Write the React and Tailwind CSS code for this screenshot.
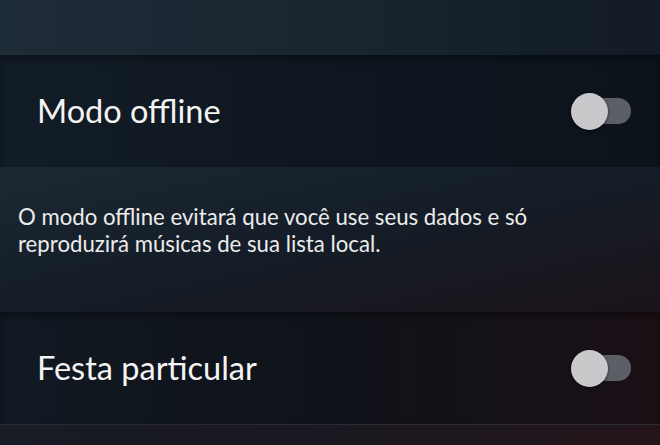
export default function App() {
  const Toggle = () => (
    <div className="relative w-[60px] h-[38px] flex items-center">
      <div className="absolute left-[19px] w-[41px] h-[26px] rounded-full bg-[#5d5f67]" />
      <div className="absolute left-0 w-[37px] h-[37px] rounded-full bg-[#c9c9cc] shadow-[0_1px_3px_rgba(0,0,0,0.6)]" />
    </div>
  );
  return (
    <div className="w-[660px] h-[445px] overflow-hidden flex flex-col bg-[#0e141b]" style={{ fontFamily: "Lato, 'Open Sans', sans-serif" }}>
      <div className="h-[55px] shrink-0 bg-gradient-to-r from-[#1e2c38] via-[#19252f] to-[#121b26]" />
      <div className="h-[112px] shrink-0 flex items-center justify-between pl-[37px] pr-[29px] bg-gradient-to-r from-[#131d27] via-[#0e1720] to-[#0c131b] shadow-[inset_0_4px_6px_rgba(0,0,0,0.35)]">
        <span className="text-[32.5px] text-[#f4f4f4] leading-none">Modo offline</span>
        <Toggle />
      </div>
      <div className="h-[145px] shrink-0 pt-[36px] pl-[18px] pr-[20px] bg-gradient-to-br from-[#1c2833] via-[#141d27] to-[#1b1319]">
        <p className="text-[22.2px] leading-[27px] text-[#ececec] w-[580px]">
          O modo offline evitará que você use seus dados e só reproduzirá músicas de sua lista local.
        </p>
      </div>
      <div className="h-[112px] shrink-0 flex items-center justify-between pl-[37px] pr-[29px] bg-gradient-to-r from-[#111922] via-[#0f1219] to-[#1a1016] shadow-[inset_0_4px_6px_rgba(0,0,0,0.35)]">
        <span className="text-[32.5px] text-[#f4f4f4] leading-none">Festa particular</span>
        <Toggle />
      </div>
      <div className="flex-1 border-t border-[#2a2a33] bg-gradient-to-r from-[#181c24] via-[#1a1820] to-[#23141a]" />
    </div>
  );
}
